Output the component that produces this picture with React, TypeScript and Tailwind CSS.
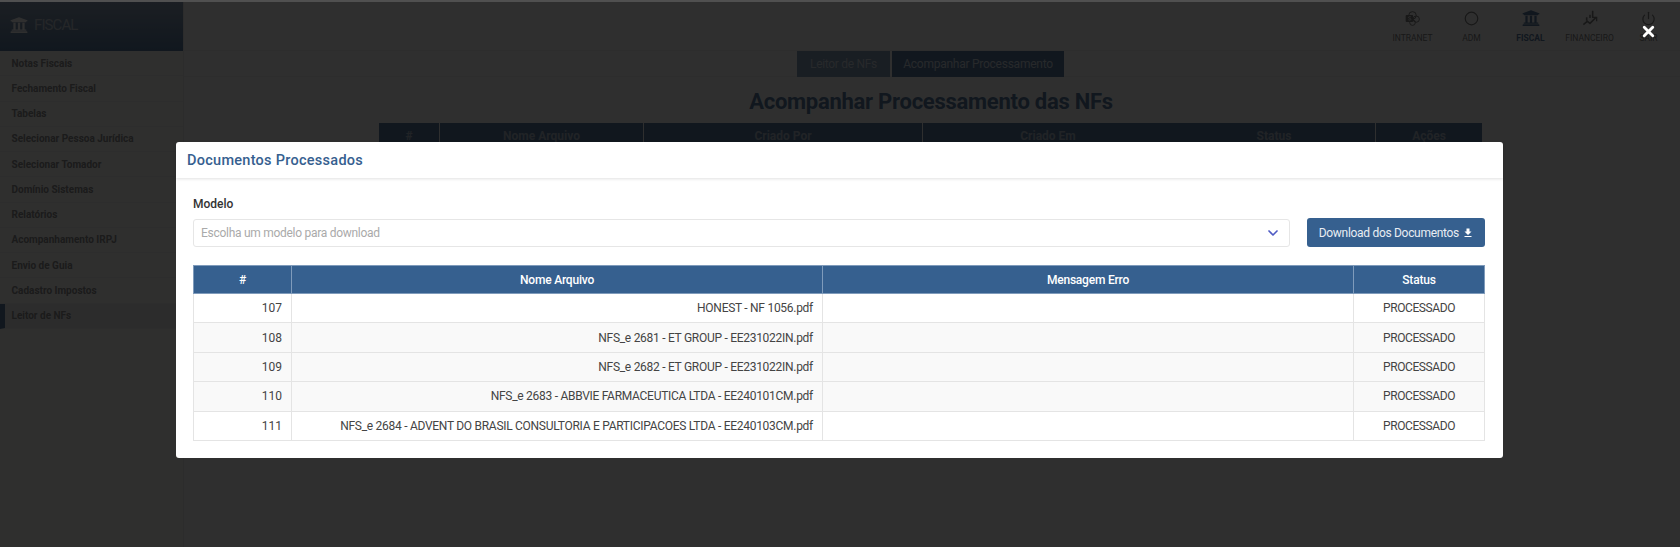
import { ChevronDown, Circle, Power, X } from "lucide-react";
import { FaUniversity } from "react-icons/fa";
import { MdFileDownload } from "react-icons/md";
import type { ReactNode } from "react";

const menu = [
  "Notas Fiscais",
  "Fechamento Fiscal",
  "Tabelas",
  "Selecionar Pessoa Jurídica",
  "Selecionar Tomador",
  "Domínio Sistemas",
  "Relatórios",
  "Acompanhamento IRPJ",
  "Envio de Guia",
  "Cadastro Impostos",
  "Leitor de NFs",
];

const docs = [
  { id: 107, nome: "HONEST - NF 1056.pdf", bg: "bg-white" },
  { id: 108, nome: "NFS_e 2681 - ET GROUP - EE231022IN.pdf", bg: "bg-[#f9f9f9]" },
  { id: 109, nome: "NFS_e 2682 - ET GROUP - EE231022IN.pdf", bg: "bg-[#f9f9f9]" },
  { id: 110, nome: "NFS_e 2683 - ABBVIE FARMACEUTICA LTDA - EE240101CM.pdf", bg: "bg-[#f9f9f9]" },
  { id: 111, nome: "NFS_e 2684 - ADVENT DO BRASIL CONSULTORIA E PARTICIPACOES LTDA - EE240103CM.pdf", bg: "bg-white" },
];

// Criado Em e Status nao tem divisoria entre eles
const bgColumns = [
  { label: "#", w: "w-[61px]", line: "border-r border-[#fff]" },
  { label: "Nome Arquivo", w: "w-[204px]", line: "border-r border-[#fff]" },
  { label: "Criado Por", w: "w-[279px]", line: "border-r border-[#fff]" },
  { label: "Criado Em", w: "w-[250px]", line: "" },
  { label: "Status", w: "w-[203px]", line: "border-r border-[#fff]" },
  { label: "Ações", w: "w-[106px]", line: "" },
];

// SharePoint mark: three linked circles with the S tile
function SharePointIcon() {
  return (
    <svg width="15" height="15" viewBox="0 0 24 24" fill="none" stroke="currentColor" strokeWidth="1.6">
      <circle cx="12" cy="7" r="6" />
      <circle cx="18" cy="13" r="5" />
      <circle cx="12" cy="18.5" r="4.5" />
      <rect x="1" y="6.5" width="12" height="11" rx="1.5" fill="currentColor" stroke="none" />
      <path d="M9.5 9.5c-1-.8-4-.8-4 .8 0 1.9 4 1 4 3 0 1.6-3 1.6-4.2.6" stroke="#fff" strokeWidth="1.3" />
    </svg>
  );
}

function FinanceIcon() {
  return (
    <svg width="16" height="16" viewBox="0 0 24 24" fill="none" stroke="currentColor" strokeWidth="2.4">
      <path d="M7 16v-5M12 12V7M16 11V1" />
      <path d="M2 22l6-5 4 3 9-9" />
      <path d="M15 11h7v6" strokeWidth="2" />
    </svg>
  );
}

function NavItem({ icon, label, active }: { icon: ReactNode; label: string; active?: boolean }) {
  return (
    <div className={`flex w-[59px] flex-col items-center ${active ? "text-[#36608f]" : "text-[#666]"}`}>
      <div className="flex h-[22px] items-center justify-center">{icon}</div>
      <span className={`mt-[3px] text-[8.5px] leading-[12px] whitespace-nowrap ${active ? "font-bold" : ""}`}>{label}</span>
    </div>
  );
}

function Background() {
  return (
    <div className="flex h-full">
      {/* Sidebar */}
      <aside className="w-[184px] shrink-0 border-r border-[#e8e8e8] bg-[#fdfdf9]">
        <div className="flex h-[51px] items-center gap-[6px] bg-[linear-gradient(180deg,#7d93ad,#36608f)] pb-[1px] pl-[10px] text-white">
          <FaUniversity size={18} />
          <span className="text-[15px] tracking-[-0.9px] text-[#b8c4d2]">FISCAL</span>
        </div>
        {menu.map((item, i) => (
          <div
            key={item}
            className={`flex h-[25.25px] items-center border-b border-[#eeeeee] pl-[11.5px] text-[10px] font-bold text-[#777] ${
              i === menu.length - 1 ? "border-l-[5px] border-l-[#36608f] bg-[#ececec] !pl-[6.5px]" : ""
            }`}
          >
            {item}
          </div>
        ))}
      </aside>

      {/* Conteudo */}
      <main className="min-w-0 flex-1">
        <div className="flex h-[51px] items-start justify-end border-b border-[#eee] pt-[7px] pr-[2px]">
          <NavItem icon={<SharePointIcon />} label="INTRANET" />
          <NavItem icon={<Circle size={15} />} label="ADM" />
          <NavItem icon={<FaUniversity size={18} />} label="FISCAL" active />
          <NavItem icon={<FinanceIcon />} label="FINANCEIRO" />
          <NavItem icon={<Power size={15} />} label="SAIR" />
        </div>
        <div className="flex h-[26px] justify-center gap-[2px] border-b border-[#eee] pr-[3px]">
          <button className="h-[26px] w-[93px] bg-[#6a8aad] text-[12px] tracking-[-0.3px] text-[#c9d4e0]">Leitor de NFs</button>
          <button className="h-[26px] w-[172px] bg-[#36608f] text-[12px] tracking-[-0.25px] text-[#c9d4e0]">Acompanhar Processamento</button>
        </div>
        <h1 className="mt-[10px] pr-[2px] text-center text-[22px] leading-[30px] font-bold tracking-[-0.26px] text-[#36608f]">
          Acompanhar Processamento das NFs
        </h1>
        <div className="mt-[6px] ml-[195px] flex h-[26px] w-[1103px] bg-[#36608f] text-[12px] font-bold text-[#9fb0c4]">
          {bgColumns.map((c) => (
            <div key={c.label} className={`${c.w} ${c.line} flex items-center justify-center`}>
              {c.label}
            </div>
          ))}
        </div>
      </main>
    </div>
  );
}

export default function App() {
  const th = "border border-[#7f9bbb] font-medium text-[12px] tracking-[-0.2px] text-white text-center h-[28px]";
  const td = "border border-[#e4e4e4] px-[9px] text-[12px] text-[#444] h-[29.4px]";

  return (
    <div className="relative h-screen w-full overflow-hidden bg-white font-['Roboto',sans-serif]">
      <Background />

      {/* Overlay do modal */}
      <div className="absolute inset-0 border-t-2 border-t-[#505050] bg-[rgba(10,10,10,0.85)] pt-[140px] pl-[176px]">
        <button className="absolute top-[21px] right-[23px] text-white">
          <X size={17} strokeWidth={4} />
        </button>

        <div className="h-[316px] w-[1327px] rounded-[3px] bg-white">
          <div className="flex h-[36px] items-center px-[11px] pt-[1px] shadow-[0_1px_3px_rgba(0,0,0,0.12)]">
            <h2 className="text-[14.5px] font-medium tracking-[0.27px] text-[#36608f]">Documentos Processados</h2>
          </div>

          <div className="pt-[18px] pr-[18px] pl-[17px]">
            <label className="block text-[12px] leading-[16px] font-medium text-[#333]">Modelo</label>
            <div className="mt-[6px] flex items-center gap-[17px]">
              <div className="flex h-[28px] flex-1 items-center justify-between rounded-[3px] border border-[#e6e6e6] pr-[8px] pl-[7px] text-[12px] tracking-[-0.28px] text-[#aaa]">
                <span>Escolha um modelo para download</span>
                <ChevronDown size={16} strokeWidth={2.5} className="text-[#4f5bc4]" />
              </div>
              <button className="flex h-[29px] w-[178px] items-center justify-end gap-[3px] rounded-[3px] bg-[#36608f] pr-[11px] text-[12px] tracking-[-0.3px] text-[#e8edf3]">
                Download dos Documentos
                <MdFileDownload size={12} className="text-white" />
              </button>
            </div>

            <table className="mt-[18px] w-[1291px] table-fixed border-collapse">
              <thead>
                <tr className="bg-[#36608f]">
                  <th className={`${th} w-[98px]`}>#</th>
                  <th className={`${th} w-[531px]`}>Nome Arquivo</th>
                  <th className={`${th} w-[531px]`}>Mensagem Erro</th>
                  <th className={`${th} w-[131px]`}>Status</th>
                </tr>
              </thead>
              <tbody>
                {docs.map((d) => (
                  <tr key={d.id} className={d.bg}>
                    <td className={`${td} text-right`}>{d.id}</td>
                    <td className={`${td} text-right tracking-[-0.28px]`}>{d.nome}</td>
                    <td className={td}></td>
                    <td className={`${td} text-center tracking-[-0.4px]`}>PROCESSADO</td>
                  </tr>
                ))}
              </tbody>
            </table>
          </div>
        </div>
      </div>
    </div>
  );
}
